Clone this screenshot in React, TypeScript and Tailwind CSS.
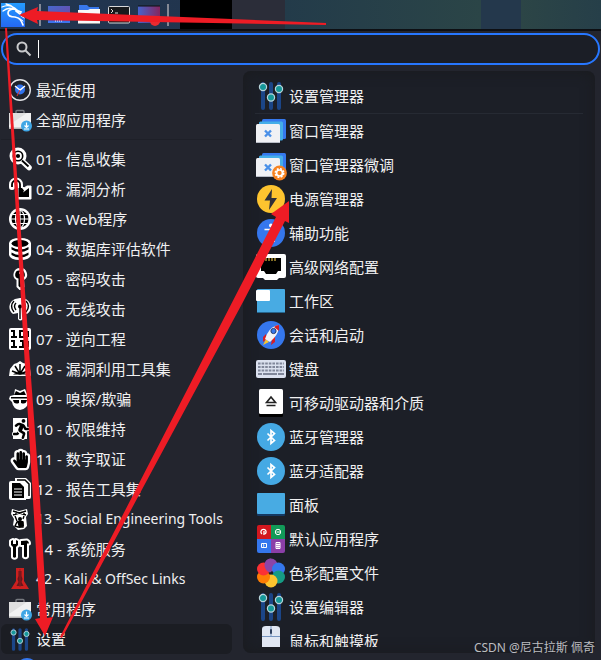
import type { ReactNode } from "react";
import { FaHandPaper, FaRunning } from "react-icons/fa";

interface Entry {
    label: string;
    icon: ReactNode;
    latin?: boolean;
}

const outline = "[paint-order:stroke] [stroke-linejoin:round] overflow-visible";

function Small({ children }: { children: ReactNode }) {
    return <svg viewBox="0 0 24 24" className="size-6 shrink-0" aria-hidden="true">{children}</svg>;
}

function Big({ children }: { children: ReactNode }) {
    return <svg viewBox="0 0 32 32" className="size-8 shrink-0" aria-hidden="true">{children}</svg>;
}

// black glyph on a white halo
function Halo({ children }: { children: ReactNode }) {
    return (
        <Small>
            <g fill="#000" stroke="#fff" strokeWidth="4" className={outline}>{children}</g>
        </Small>
    );
}

function BriefcaseIcon() {
    return (
        <Small>
            <path d="M8 5V3.500q0-1 1-1h6q1 0 1 1V5" fill="none" stroke="#777a80" strokeWidth="1.4" />
            <path d="M1 5h22v15H1z" fill="#f1f1f1" />
            <path d="M1 5h18L1 17z" fill="#dfdfdf" />
            <path d="M1 19.500h22v1.500H1z" fill="#b5b5b5" />
            <circle cx="18.5" cy="18" r="5.5" fill="#3fa6e5" />
            <path d="M18.5 14.5v5m-2-2 2 2 2-2M16 21h5" fill="none" stroke="#fff" strokeWidth="1.2" />
        </Small>
    );
}

function Sliders() {
    return (
        <>
            <path d="M8 4v24M16 4v24M24 4v24" stroke="#1b4587" strokeWidth="4" strokeLinecap="round" />
            <g fill="#16989a" stroke="#b9d5dc" strokeWidth="1.2">
                <circle cx="8" cy="7" r="3.6" />
                <circle cx="16" cy="17.500" r="3.6" />
                <circle cx="24" cy="9" r="3.6" />
            </g>
        </>
    );
}

function SlidersIcon() {
    return <Big><Sliders /></Big>;
}

function WindowsIcon({ gear = false }: { gear?: boolean }) {
    return (
        <Big>
            <rect x="7" y="4" width="24" height="20" rx="1.500" fill="#3579ee" />
            <rect x="4" y="6.500" width="24" height="19" rx="1.500" fill="#45aee8" />
            <rect x="1" y="9" width="24" height="19" rx="1.500" fill="#f0f1f4" />
            <path d="m10 15.500 6 6m0-6-6 6" stroke="#4a90e8" strokeWidth="2.4" />
            <path d="M1 27.500h24" stroke="#b8bcc5" />
            {gear && (
                <>
                    <circle cx="24.500" cy="24" r="7.400" fill="#f78320" />
                    <circle cx="24.500" cy="24" r="4.200" fill="none" stroke="#fff" strokeWidth="1.6" strokeDasharray="1.9 1.4" />
                    <circle cx="24.500" cy="24" r="3" fill="none" stroke="#fff" strokeWidth="1.7" />
                </>
            )}
        </Big>
    );
}

function BluetoothIcon() {
    return (
        <Big>
            <circle cx="16" cy="16" r="14" fill="#45a9e4" />
            <path d="m12.500 12.500 7 7-3.500 3v-13l3.500 3-7 7" fill="none" stroke="#fff" strokeWidth="1.700" />
        </Big>
    );
}

const recentIcon = (
    <Small>
        <circle cx="12" cy="12" r="10.300" fill="#20222b" stroke="#e4e5e8" strokeWidth="1.400" />
        <circle cx="12" cy="11.500" r="5" fill="#3274ee" />
        <path d="m7 8 5 4 5-4" fill="none" stroke="#fff" strokeWidth="1.400" />
        <path d="m12 12-3 6" stroke="#d33" />
    </Small>
);

const pinned: Entry[] = [
    { label: "最近使用", icon: recentIcon },
    { label: "全部应用程序", icon: <BriefcaseIcon /> },
];

const categories: Entry[] = [
    {
        label: "01 - 信息收集",
        icon: (
            <Small>
                <path d="m13 13 8 7.500" stroke="#fff" strokeWidth="5.500" strokeLinecap="round" />
                <circle cx="10" cy="9" r="8.500" fill="#fff" />
                <circle cx="10" cy="9" r="5.500" />
                <circle cx="10" cy="9" r="3" fill="none" stroke="#fff" strokeWidth="1.800" />
                <path d="m14 13.500 6.500 6" stroke="#000" strokeWidth="1.800" />
            </Small>
        ),
    },
    {
        label: "02 - 漏洞分析",
        icon: (
            <Small>
                <path d="M4 10V7.500a4 4 0 0 1 8 0V11" fill="none" stroke="#fff" strokeWidth="6" strokeLinecap="round" />
                <path d="M9 9h5l2 2 3-2h4v13H9z" fill="#fff" stroke="#fff" strokeWidth="1" strokeLinejoin="round" />
                <path d="M4 10V7.500a4 4 0 0 1 8 0V11" fill="none" stroke="#000" strokeWidth="1.800" />
                <path d="M10.500 11H14l2 2.500-1 2 6-4.500v9H10.500z" />
            </Small>
        ),
    },
    {
        label: "03 - Web程序",
        icon: (
            <Small>
                <circle cx="12" cy="12" r="11" fill="#fff" />
                <circle cx="12" cy="12" r="8.500" />
                <g fill="none" stroke="#fff" strokeWidth="1.200">
                    <ellipse cx="12" cy="12" rx="4.500" ry="8.500" />
                    <path d="M12 3v18M3 12h18M5 7.500h14M5 16.500h14" />
                </g>
            </Small>
        ),
    },
    {
        label: "04 - 数据库评估软件",
        icon: (
            <Small>
                <path d="M1 6q1-5 11-5t11 5v12q-1 5-11 5T1 18z" fill="#fff" />
                <ellipse cx="12" cy="6.500" rx="8.500" ry="3.500" />
                <path d="M3.500 10q8.500 5 17 0v2.500q-8.500 5-17 0zM3.500 15.500q8.500 5 17 0V18q-8.500 5-17 0z" />
            </Small>
        ),
    },
    {
        label: "05 - 密码攻击",
        icon: (
            <Small>
                <path d="M12 1a6.500 6.500 0 0 0-3.500 12v7l3 3h2l3-3-.500-7A6.500 6.500 0 0 0 12 1" fill="#fff" />
                <path d="M12 3.500a4 4 0 0 0-1.500 8V19l1.500 1.500 2-2-1-1.500 1-1.500-1-1.500.500-2.500A4 4 0 0 0 12 3.500" />
                <circle cx="12" cy="6" r="1" fill="#fff" />
            </Small>
        ),
    },
    {
        label: "06 - 无线攻击",
        icon: (
            <Small>
                <path d="M12 1a10 9 0 0 1 7 16l-4-1v6q-3 3-5 0v-6l-5 1A10 9 0 0 1 7 2z" fill="#fff" />
                <g fill="none" stroke="#000" strokeWidth="1.400">
                    <path d="M6 4q-5 5 0 11M8 6q-3 3 0 7M18 4q5 5 0 11M16 6q3 3 0 7M12 10v12" />
                </g>
                <circle cx="12" cy="9.500" r="2" />
            </Small>
        ),
    },
    {
        label: "07 - 逆向工程",
        icon: (
            <Small>
                <rect x="1" y="1" width="22" height="22" rx="2" fill="#fff" />
                <g fill="none" stroke="#000" strokeWidth="2">
                    <path d="M3 4h3v6M3 10h6M12 4h4v6h-4zM3 14h3v6M3 20h6M12 14h3v6M11 20h6M20 4v6M20 14v6" />
                </g>
            </Small>
        ),
    },
    {
        label: "08 - 漏洞利用工具集",
        icon: (
            <Small>
                <path d="m1 19 1-7 4-5 3-1 3-2 3 2 4 1 3 5 1 7z" fill="#fff" />
                <path d="m12 17-8-3m8 3L7 9m5 8V7m0 10 5-8m-5 8 8-3" stroke="#000" strokeWidth="1.500" />
                <path d="M5 17.500q2-2 4-1.500 3-2 6 0 2-.500 4 1.500z" />
            </Small>
        ),
    },
    {
        label: "09 - 嗅探/欺骗",
        icon: (
            <Small>
                <path d="m7 2 5 2 5-2 3 7 3 1-1 3-2 1q0 8-8 9-7-1-8-8L1 12l1-3 4-1z" fill="#fff" />
                <path d="m8 4 4 2 4-2 2 4H6zM3 10h18v1.500H3zM5 13h6v3q-5 2-6-3m8 0h6q-1 5-6 3z" />
            </Small>
        ),
    },
    {
        label: "10 - 权限维持",
        icon: (
            <Small>
                <path d="M5 1h14v21H5z" fill="#fff" />
                <g transform="translate(3 2)">
                    <FaRunning size={20} color="#000" stroke="#fff" strokeWidth={50} className={outline} />
                </g>
            </Small>
        ),
    },
    {
        label: "11 - 数字取证",
        icon: (
            <span className="flex size-6 shrink-0 items-center justify-center text-black">
                <FaHandPaper size={17} stroke="#fff" strokeWidth={140} className={outline} />
            </span>
        ),
    },
    {
        label: "12 - 报告工具集",
        icon: (
            <Small>
                <path d="M7 1h11l5 5v14q0 2-2 2H7z" fill="#fff" />
                <path d="M9 3h8l4 4v12" fill="none" stroke="#000" strokeWidth="1.500" />
                <path d="M3 4h10l5 5v14H3q-2 0-2-2V6q0-2 2-2" fill="#fff" />
                <path d="M4 6h8l4 4v11H4z" />
                <path d="M6 12h8M6 15h8M6 18h8" stroke="#fff" />
            </Small>
        ),
    },
    {
        label: "13 - Social Engineering Tools",
        latin: true,
        icon: (
            <Small>
                <path d="m4 2 7 2 8-2 1 5-2 3 1 9-3 3-6 1-5-5 1-6-3-5z" fill="#fff" />
                <path d="m5 4 13 4M5 8l13-4M7 9l2 5m7-5-1 3M7 19l2-4 3-1 3 1v5h-5zM8 4v4m8-4v4" fill="none" stroke="#000" strokeWidth="1.400" />
                <circle cx="12" cy="12" r="2" />
                <path d="M9 14h6l1 5-5 2z" />
            </Small>
        ),
    },
    {
        label: "14 - 系统服务",
        icon: (
            <Halo>
                <path d="M3 4v4l2 2v10q1.500 1.500 3 0V10l2-2V4L8 3v4H5V3zM13 4l6-.500q2 1 2 3h-2v13q-1.500 1.500-3 0V8h-3z" />
            </Halo>
        ),
    },
    {
        label: "42 - Kali & OffSec Links",
        latin: true,
        icon: (
            <Small>
                <path d="M8 1h8v13l5 8H3l5-8z" fill="#cd201f" />
                <path d="M10.500 4h3v5l1 3-1 3 2 4h-7l2-4-1-3 1-3z" fill="#65171b" />
                <path d="M12 2v18" stroke="#8e1b20" />
            </Small>
        ),
    },
    { label: "常用程序", icon: <BriefcaseIcon /> },
    {
        label: "设置",
        icon: (
            <svg viewBox="3 3 26 26" className="size-6 shrink-0" aria-hidden="true">
                <path d="M9 6v21M16 6v21M23 6v21" stroke="#1b4587" strokeWidth="3.500" strokeLinecap="round" />
                <g fill="#16989a" stroke="#b9d5dc" strokeWidth="1">
                    <circle cx="9" cy="9" r="2.800" />
                    <circle cx="16" cy="18" r="2.800" />
                    <circle cx="23" cy="10.500" r="2.800" />
                </g>
            </svg>
        ),
    },
];

const settings: Entry[] = [
    { label: "窗口管理器", icon: <WindowsIcon /> },
    { label: "窗口管理器微调", icon: <WindowsIcon gear /> },
    {
        label: "电源管理器",
        icon: (
            <Big>
                <circle cx="16" cy="16" r="14" fill="#fdc42f" />
                <path d="M17 6 9.500 17.500H15L14 27l8-12h-5.500z" fill="#2d2f38" />
            </Big>
        ),
    },
    {
        label: "辅助功能",
        icon: (
            <Big>
                <circle cx="16" cy="16" r="14" fill="#3577ed" />
                <circle cx="16" cy="8.500" r="2" fill="#fff" />
                <path d="M9.500 12.500h13M16 12v6m-3.500 7 3.500-7 3.500 7" fill="none" stroke="#fff" strokeWidth="1.500" />
            </Big>
        ),
    },
    {
        label: "高级网络配置",
        icon: (
            <Big>
                <path d="M3 3h26q2 0 2 2v20q0 2-2 2h-5l-2 2H10l-2-2H3q-2 0-2-2V5q0-2 2-2" fill="#fff" />
                <path d="M6 7h20v13h-3l-2 3H11l-2-3H6z" />
                <path d="M11 7v3m3-3v3m3-3v3m3-3v3" stroke="#d8b53c" strokeWidth="1.200" />
            </Big>
        ),
    },
    {
        label: "工作区",
        icon: (
            <Big>
                <rect x="2" y="4" width="28" height="24" rx="1" fill="#48abe3" />
                <path d="M2 27.500h28" stroke="#27668e" />
                <rect x="1" y="5" width="14" height="11" rx="1" fill="#fff" />
            </Big>
        ),
    },
    {
        label: "会话和启动",
        icon: (
            <Big>
                <circle cx="16" cy="16" r="14" fill="#3577ed" />
                <path d="m11 15-3 3v5l4-3zm6 5-1 6 4-3v-6z" fill="#d51f26" />
                <path d="m11 20-3 6 6-3z" fill="#f7c42f" />
                <path d="M24 6q-8 1-12 9l-2 5 5 3 4-4q5-5 5-13" fill="#f3f4f7" />
                <path d="M24 6q-3 0-5 2l5 4z" fill="#d51f26" />
                <circle cx="18.500" cy="12" r="2.600" fill="#3577ed" stroke="#293d69" />
            </Big>
        ),
    },
    {
        label: "键盘",
        icon: (
            <Big>
                <rect x="1" y="7" width="30" height="18" rx="2" fill="#dbe1ef" />
                <path d="M3 10.500h26M3 14h26M3 17.500h26" stroke="#80879a" strokeWidth="2.200" strokeDasharray="2.600 1" />
                <path d="M3 21h4m1 0h14m1 0h6" stroke="#80879a" strokeWidth="2.200" />
            </Big>
        ),
    },
    {
        label: "可移动驱动器和介质",
        icon: (
            <Big>
                <rect x="4" y="4" width="24" height="26" rx="1.500" />
                <rect x="4" y="2" width="24" height="25" rx="1.500" fill="#fff" />
                <path d="m16 10-4.500 5.500h9zM11.500 18.500h9" fill="none" stroke="#222" strokeWidth="1.600" />
            </Big>
        ),
    },
    { label: "蓝牙管理器", icon: <BluetoothIcon /> },
    { label: "蓝牙适配器", icon: <BluetoothIcon /> },
    {
        label: "面板",
        icon: (
            <Big>
                <rect x="2" y="4" width="28" height="23" rx="1" fill="#153962" />
                <rect x="2" y="4" width="28" height="21" rx="1" fill="#48abe3" />
            </Big>
        ),
    },
    {
        label: "默认应用程序",
        icon: (
            <Big>
                <path d="M2 4q0-2 2-2h12v14H2z" fill="#d3171e" />
                <path d="M16 2h12q2 0 2 2v12H16z" fill="#129a58" />
                <path d="M2 16h14v14H4q-2 0-2-2z" fill="#3577ed" />
                <path d="M16 16h14v12q0 2-2 2H16z" fill="#8b3fa8" />
                <g fill="none" stroke="#fff">
                    <path d="M7 11a2.600 2.600 0 1 1 3 0m-1-3v4" strokeWidth="1.300" />
                    <circle cx="23" cy="9" r="2.700" />
                    <path d="M21.500 9h3.500" />
                    <path d="M6.500 20.500h5v4h-5zm1.500 1 1.200 1-1.200 1" />
                    <path d="M21 19.500h4v6h-4zm0 2h4m-4 2h4m-2-3v5" />
                </g>
            </Big>
        ),
    },
    {
        label: "色彩配置文件",
        icon: (
            <Big>
                <circle cx="16" cy="8" r="6.500" fill="#8b45a8" />
                <circle cx="23.500" cy="12" r="6.500" fill="#3577ed" />
                <circle cx="23.500" cy="20" r="6.500" fill="#169b84" />
                <circle cx="16" cy="24" r="6.500" fill="#fdc42f" />
                <circle cx="8.500" cy="20" r="6.500" fill="#fd7d05" />
                <circle cx="8.500" cy="12" r="6.500" fill="#fb3135" />
                <path d="M16 1.500a6.500 6.500 0 0 0-6 9q1 4 6 5.500z" fill="#8b45a8" />
                <circle cx="16" cy="16" r="1" fill="#1c1f27" />
            </Big>
        ),
    },
    { label: "设置编辑器", icon: <SlidersIcon /> },
    {
        label: "鼠标和触摸板",
        icon: (
            <Big>
                <path d="M7 4q0-3 4-3h10q4 0 4 3v26H7z" fill="#e1e7f3" />
                <path d="M7 11.500h18M16 1v10" stroke="#7795c1" />
                <rect x="15" y="4" width="2" height="5" rx="1" fill="#2e3f5e" />
            </Big>
        ),
    },
];

function TopBar() {
    return (
        <header className="flex h-[31px] shrink-0 border-b-2 border-[#0d0f13] bg-linear-to-r from-[#213550] to-[#22354a]">
            <div className="flex w-[180px] shrink-0 items-center">
                <button aria-label="Applications" className="ml-px">
                    <svg viewBox="0 0 24 24" className="size-6">
                        <defs>
                            <linearGradient id="kali" x2="0" y2="1">
                                <stop stopColor="#249cff" />
                                <stop offset="1" stopColor="#2468f2" />
                            </linearGradient>
                        </defs>
                        <path d="M0 0h24v24H0z" fill="url(#kali)" />
                        <g fill="none" stroke="#fff" strokeLinecap="round">
                            <path d="M1 4q8-4 15 3M2 8q6-5 13-1M5 1q5 1 8 4" strokeWidth="1.300" />
                            <path d="M14 6q-7 0-7 4 0 4 7 4 6 1 8 8M15 7l5 2-1 2-4-3" strokeWidth="1.700" />
                            <path d="m18 15 4 3m-2-5 3 2" strokeWidth="1" />
                        </g>
                    </svg>
                </button>
                <span className="ml-3.5 h-[22px] w-0.5 bg-[#848995]" />
                <div className="ml-[7px] flex items-center gap-2">
                    <button aria-label="Desktop">
                        <svg viewBox="0 0 22 22" className="size-[22px]">
                            <defs>
                                <linearGradient id="desk" x2="1" y2="1">
                                    <stop stopColor="#4569ce" />
                                    <stop offset="1" stopColor="#76429e" />
                                </linearGradient>
                            </defs>
                            <path d="M0 2h22v17H0z" fill="url(#desk)" />
                            <path d="M0 18h22" stroke="#3e73ec" strokeWidth="2" />
                            <path d="M7 17h8" stroke="#fff" strokeDasharray="1 1" />
                        </svg>
                    </button>
                    <button aria-label="Files">
                        <svg viewBox="0 0 22 22" className="size-[22px]">
                            <path d="M1 6V1h8l2 2h10v4z" fill="#3878ec" />
                            <path d="M0 6h10l2-1h10v15H0z" fill="#f8f8f8" />
                            <path d="M0 19.500h22" stroke="#999" />
                        </svg>
                    </button>
                    <button aria-label="Terminal">
                        <svg viewBox="0 0 22 22" className="size-[22px]">
                            <rect x=".500" y="2.500" width="21" height="16.500" rx="1" fill="#181a1d" stroke="#d7d8da" />
                            <path d="m3 5 2 2-2 2m4 0h3" fill="none" stroke="#ddd" />
                        </svg>
                    </button>
                    <button aria-label="Screen recorder">
                        <svg viewBox="0 0 22 22" className="size-[22px] overflow-visible">
                            <defs>
                                <linearGradient id="rec" x2="1" y2="0">
                                    <stop stopColor="#4664cc" />
                                    <stop offset="1" stopColor="#85265f" />
                                </linearGradient>
                            </defs>
                            <path d="M0 2h22v17H0z" fill="url(#rec)" />
                            <path d="M0 2h22" stroke="#111" />
                            <circle cx="17" cy="17" r="5" fill="#e92b30" />
                        </svg>
                    </button>
                </div>
                <span className="ml-[7px] h-[22px] w-0.5 bg-[#848995]" />
            </div>
            <div className="w-[52px] shrink-0 bg-black" />
            <div className="w-[53px] shrink-0 bg-[#2b2d39]" />
            <div className="h-full w-[196px] shrink-0 bg-linear-to-r from-[#233b4a] to-[#2b4547]" />
            <div className="w-10 shrink-0 bg-[#24384c]" />
            <div className="h-full flex-1 bg-linear-to-r from-[#2c4546] to-[#263f49]" />
        </header>
    );
}

function CategoryRow({ entry, active = false }: { entry: Entry; active?: boolean }) {
    return (
        <li>
            <button
                className={`flex h-[30px] w-full items-center gap-1 rounded-md pl-[7px] text-left ${active ? "bg-[#1b1d23]" : ""}`}
            >
                {entry.icon}
                <span className={`whitespace-nowrap ${entry.latin ? "text-sm" : ""}`}>{entry.label}</span>
            </button>
        </li>
    );
}

function SettingRow({ entry }: { entry: Entry }) {
    return (
        <li>
            <button className="flex h-[34px] w-full items-center gap-0.5 text-left">
                {entry.icon}
                <span className="whitespace-nowrap">{entry.label}</span>
            </button>
        </li>
    );
}

function Arrows() {
    return (
        <svg viewBox="0 0 601 660" width="601" height="660" className="pointer-events-none absolute left-0 top-0" aria-hidden="true">
            <g fill="#ee1c25">
                <path d="M19 15 38 7l-1 4 289 12v2L37 20l1 4z" />
                <path d="M5 28h2l22 322 11 150 7 118 6-1-8 19-10-17 5-1-7-118-9-150z" />
                <path d="m289 201-18 13 5 3-36 70L60 637l2 1 181-336 42-81 4 2z" />
            </g>
        </svg>
    );
}

export default function App() {
    return (
        <div className="relative flex h-screen flex-col overflow-hidden bg-[#23252e] font-['Noto_Sans','Noto_Sans_CJK_SC',sans-serif] text-[15px] leading-5 text-[#f0f0f1]">
            <TopBar />

            <label className="mx-px mt-0.5 flex h-8 shrink-0 items-center rounded-full border-2 border-[#2777ff] bg-[#1b1e26] pl-[13px]">
                <svg viewBox="0 0 16 16" className="size-4 shrink-0" fill="none" stroke="#c9cacc" strokeWidth="2">
                    <circle cx="6" cy="6" r="4.500" />
                    <path d="m9.500 9.500 5 5" />
                </svg>
                <span className="ml-1.5 h-[18px] w-px bg-white" />
                <input type="text" aria-label="搜索" className="min-w-0 flex-1 bg-transparent outline-none" />
            </label>

            <div className="flex min-h-0 flex-1">
                <nav className="w-[243px] shrink-0 overflow-hidden pl-px pr-[11px] pt-2.5">
                    <ul>
                        {pinned.map((entry) => <CategoryRow key={entry.label} entry={entry} />)}
                    </ul>
                    <hr className="my-1 border-[#1e2028]" />
                    <ul>
                        {categories.map((entry) => (
                            <CategoryRow key={entry.label} entry={entry} active={entry.label === "设置"} />
                        ))}
                    </ul>
                    <div className="flex h-[30px] items-center pl-3.5">
                        <Small><circle cx="12" cy="12" r="11" fill="#3577ed" /></Small>
                    </div>
                </nav>

                <main className="mb-[7px] mr-1.5 mt-1.5 flex min-w-0 flex-1 flex-col rounded-lg bg-[#1c1f27] px-3 pb-1.5 pt-2 shadow-[inset_0_0_14px_#1a1b1e]">
                    <div className="min-h-0 flex-1 overflow-hidden">
                        <ul>
                            <SettingRow entry={{ label: "设置管理器", icon: <SlidersIcon /> }} />
                        </ul>
                        <hr className="border-[#262a33]" />
                        <ul>
                            {settings.map((entry) => <SettingRow key={entry.label} entry={entry} />)}
                        </ul>
                    </div>
                </main>
            </div>

            <p className="absolute bottom-1 right-1.5 text-xs leading-4 text-[#bcbdc0]">CSDN @尼古拉斯 佩奇</p>
            <Arrows />
        </div>
    );
}
